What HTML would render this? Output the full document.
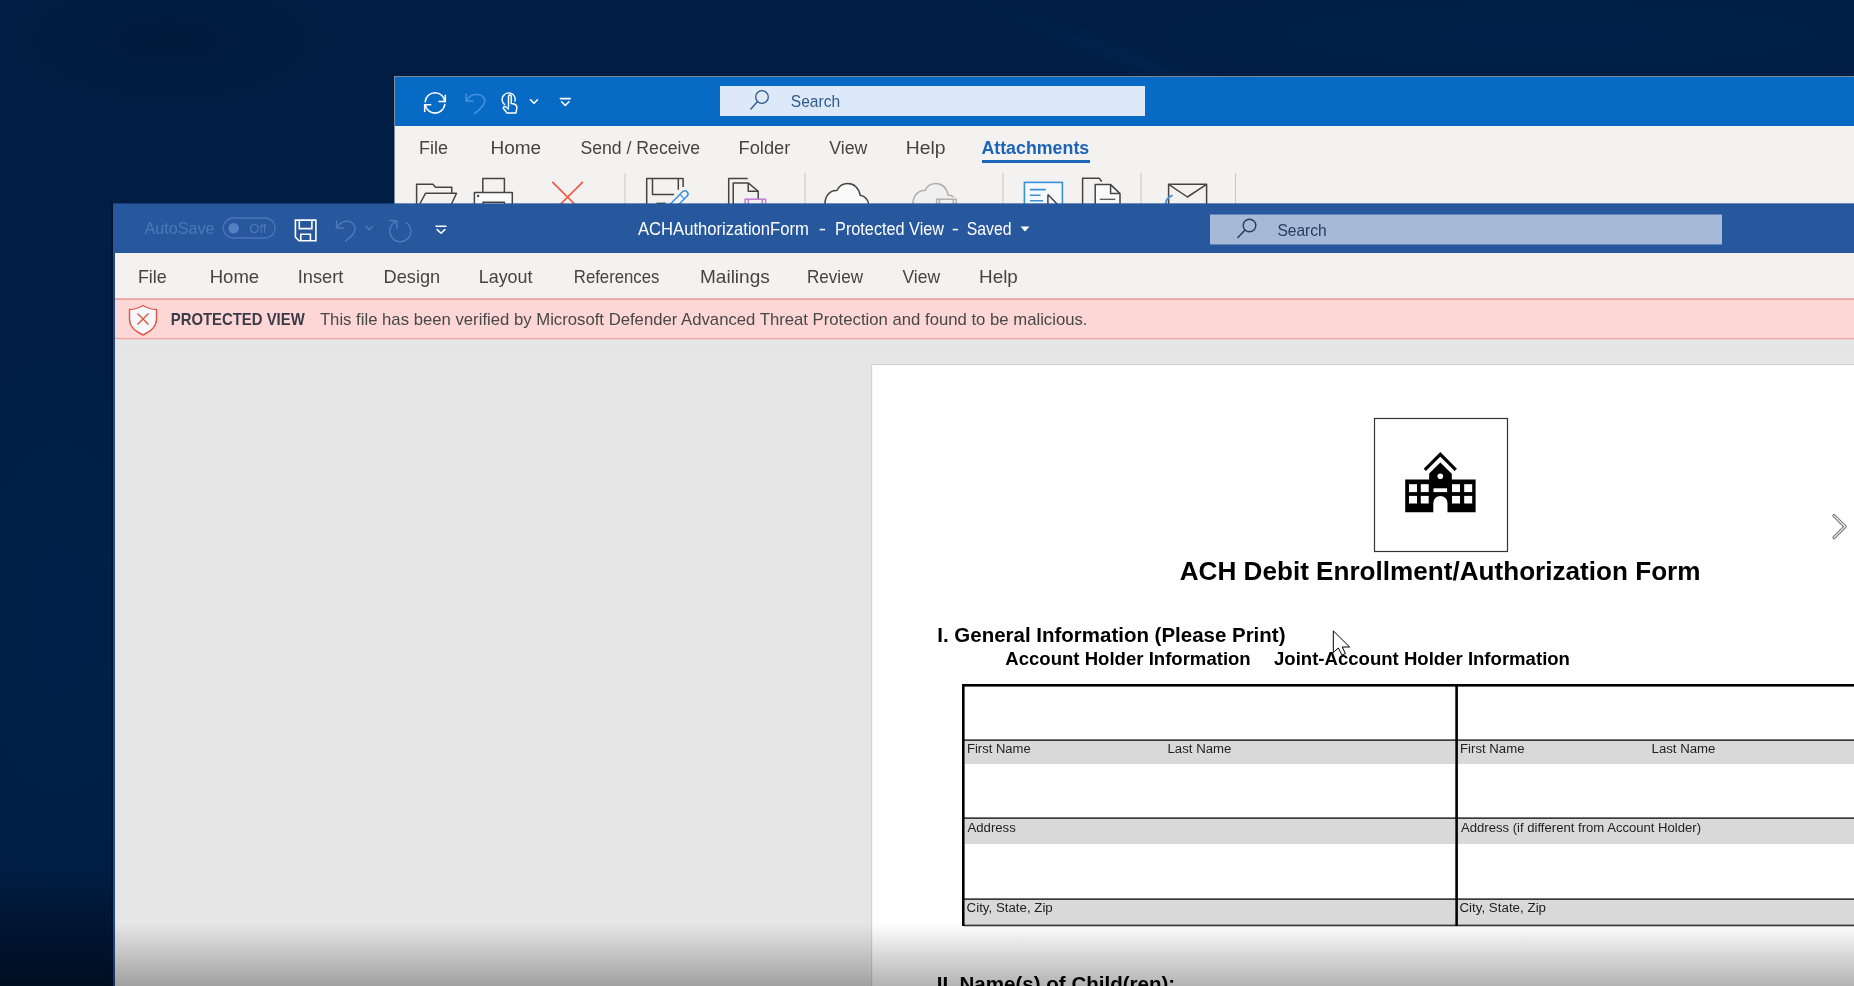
<!DOCTYPE html>
<html><head><meta charset="utf-8"><style>
html,body{margin:0;padding:0;width:1854px;height:986px;overflow:hidden;background:#011a3c}
svg{display:block;will-change:transform}
text{font-family:"Liberation Sans",sans-serif;white-space:pre}
</style></head><body>
<svg width="1854" height="986" viewBox="0 0 1854 986">
<defs>
 <radialGradient id="dk1" cx="0.5" cy="0.5" r="0.5"><stop offset="0" stop-color="#00295a" stop-opacity="0.9"/><stop offset="1" stop-color="#00295a" stop-opacity="0"/></radialGradient>
 <radialGradient id="dk2" cx="0.5" cy="0.5" r="0.5"><stop offset="0" stop-color="#00122c" stop-opacity="0.9"/><stop offset="1" stop-color="#00122c" stop-opacity="0"/></radialGradient>
 <linearGradient id="btm" x1="0" y1="0" x2="0" y2="1"><stop offset="0" stop-color="#000" stop-opacity="0"/><stop offset="1" stop-color="#000" stop-opacity="0.3"/></linearGradient>
 <linearGradient id="dkb" x1="0" y1="0" x2="0" y2="1"><stop offset="0" stop-color="#000c20" stop-opacity="0"/><stop offset="0.4" stop-color="#000c20" stop-opacity="0.8"/><stop offset="1" stop-color="#000c20" stop-opacity="1"/></linearGradient>
</defs>
<!-- desktop -->
<rect x="0" y="0" width="1854" height="986" fill="#001e43"/>
<ellipse cx="60" cy="620" rx="140" ry="300" fill="url(#dk1)" opacity="0.35"/>
<ellipse cx="1550" cy="35" rx="450" ry="55" fill="url(#dk1)" opacity="0.35"/>
<ellipse cx="170" cy="40" rx="170" ry="70" fill="url(#dk2)" opacity="0.35"/>
<rect x="0" y="870" width="120" height="116" fill="url(#dkb)" opacity="0.55"/>
<ellipse cx="1120" cy="55" rx="170" ry="14" transform="rotate(20 1120 55)" fill="url(#dk1)" opacity="0.5"/>

<!-- ===== Outlook window ===== -->
<rect x="394" y="76" width="1470" height="140" fill="#7d8898"/>
<rect x="395" y="77" width="1470" height="49" fill="#076ac4"/>
<rect x="395" y="126" width="1470" height="90" fill="#f3f2f1"/>
<!-- search box -->
<rect x="720" y="86" width="425" height="30" fill="#dde9f8"/>
<g fill="none" stroke="#2e5b8c" stroke-width="1.3"><circle cx="762" cy="97" r="6.3"/><path d="M757.5 101.5 L750.5 109.5"/></g>
<text x='790.87' y='107' font-size='16.8' font-weight='normal' fill='#2e5b8c' textLength='49.21' lengthAdjust='spacingAndGlyphs'>Search</text>
<!-- QAT icons -->
<g fill="none" stroke="#fff" stroke-width="1.6" stroke-linecap="round" stroke-linejoin="round">
 <path d="M425.2 101.6 A9.9 9.9 0 0 1 444.9 101.6"/><path d="M445.3 95.3 L445.3 101.5 L439.1 101.5"/>
 <path d="M444.8 104.6 A9.9 9.9 0 0 1 425.2 104.6"/><path d="M424.7 111.4 L424.7 104.8 L430.7 104.8"/>
 <path d="M530.5 99.8 L534 103.3 L537.5 99.8"/>
 <path d="M560.3 98.6 L570.3 98.6"/><path d="M561.6 101.8 L565.3 105.4 L569 101.8"/>
</g>
<g fill="none" stroke="#4a90dd" stroke-width="1.5" stroke-linecap="round" stroke-linejoin="round">
 <path d="M466 94 L466 101 L473 101"/><path d="M466.5 100.5 C470 94 480 92 484 98 C487 103 480 110 474.5 113.5"/>
</g>
<g fill="none" stroke="#fff" stroke-width="1.5" stroke-linecap="round" stroke-linejoin="round">
 <path d="M504.5 104.5 A6.5 6.5 0 1 1 515 101"/>
 <path d="M508.5 107 L508.5 96.5 A1.4 1.4 0 0 1 511.3 96.5 L511.3 103.5 L514 104 C516 104.5 517 106 516.8 108 L516 113 L507 113 L503.5 108.5 C503 107 504.5 105.8 506 107 L508.5 109"/>
</g>
<text x='419.00' y='154' font-size='18' font-weight='normal' fill='#444' textLength='29.02' lengthAdjust='spacingAndGlyphs'>File</text>
<text x='490.45' y='154' font-size='18' font-weight='normal' fill='#444' textLength='50.63' lengthAdjust='spacingAndGlyphs'>Home</text>
<text x='580.52' y='154' font-size='18' font-weight='normal' fill='#444' textLength='119.53' lengthAdjust='spacingAndGlyphs'>Send / Receive</text>
<text x='738.48' y='154' font-size='18' font-weight='normal' fill='#444' textLength='51.95' lengthAdjust='spacingAndGlyphs'>Folder</text>
<text x='829.30' y='154' font-size='18' font-weight='normal' fill='#444' textLength='38.11' lengthAdjust='spacingAndGlyphs'>View</text>
<text x='905.83' y='154' font-size='18' font-weight='normal' fill='#444' textLength='39.78' lengthAdjust='spacingAndGlyphs'>Help</text>
<text x='981.41' y='154' font-size='18' font-weight='bold' fill='#1c64b8' textLength='107.81' lengthAdjust='spacingAndGlyphs'>Attachments</text>
<rect x="982" y="160" width="108" height="3" fill="#1c64b8"/>
<!-- ribbon separators -->
<g fill="#c8c6c4"><rect x="624.5" y="173" width="1" height="32"/><rect x="804.5" y="173" width="1" height="32"/><rect x="1002.5" y="173" width="1" height="32"/><rect x="1140.5" y="173" width="1" height="32"/><rect x="1235" y="173" width="1" height="32"/></g>
<!-- ribbon icons (partially covered) -->
<g fill="none" stroke="#444" stroke-width="1.5" stroke-linejoin="round">
 <path d="M416.6 205 L416.6 184.2 L432.9 184.2 L435.5 187.3 L451.8 187.3 L451.8 193.2"/><path d="M419.2 205 L425.5 193.3 L456.5 193.3 L451 205"/>
 <path d="M482.8 192.4 L482.8 178.6 L504.4 178.6 L504.4 192.4"/><rect x="474.4" y="192.5" width="37.9" height="16" fill="#fafafa"/><rect x="483" y="202.3" width="21.4" height="6" fill="#fafafa"/>
 <path d="M646.7 205 L646.7 178.4 L683.1 178.4 L683.1 187"/><path d="M652.5 178.4 L652.5 194.6 L674 194.6"/><path d="M678.3 178.4 L678.3 189.8"/>
 <path d="M728.7 205 L728.7 178.4 L747.7 178.4"/><path d="M733.2 205 L733.2 182.9 L748.2 182.9 L758.2 191.3 L758.2 199"/><path d="M748.2 182.9 L748.2 191.3 L758.2 191.3"/>
 <path d="M825 205 C824.5 196 830 190 837 190.5 C839.5 185.5 843.5 183.6 847.6 183.6 C854 183.6 859 188 860.2 195.3 C865 196 868.6 200 868.6 205" fill="#fafafa"/>
 <path d="M1082.6 205 L1082.6 178.2 L1099.1 178.2 L1101.8 181.5"/><path d="M1095.2 205 L1095.2 184.6 L1110.6 184.6 L1120 193.6 L1120 205" fill="#fafafa"/><path d="M1110.6 184.6 L1110.6 193.6 L1120 193.6"/>
 <path d="M1168.6 205 L1168.6 184.3 L1206.6 184.3 L1206.6 205"/><path d="M1169 184.6 L1187.4 197 L1206.2 184.6"/>
</g>
<path d="M1099.8 199.3 L1115.3 199.3" stroke="#555" stroke-width="1.3"/>
<circle cx="478.1" cy="195.9" r="1.2" fill="#444"/>
<path d="M667.5 207 L682.5 191.8 A3 3 0 0 1 687 196.3 L672 211 Z" fill="#f4f8fc" stroke="#3a8ee0" stroke-width="1.5"/><path d="M680 194.3 L684.5 198.8" stroke="#3a8ee0" stroke-width="1.2"/><rect x="656.4" y="202.6" width="9.2" height="2" fill="#444"/>
<g stroke="#4a90dd" stroke-width="1.8" fill="none" stroke-linecap="round"><path d="M1165.2 205 C1165.8 200 1168.5 197 1172 195.6"/></g>
<g fill="none" stroke="#ec5a45" stroke-width="1.7"><path d="M552.3 181.8 L583 212.5"/><path d="M582.9 181.8 L552.2 212.5"/></g>
<g fill="none" stroke="#c27ad8" stroke-width="1.5"><rect x="745.2" y="199.2" width="20.4" height="9"/><path d="M748.3 199.2 L748.3 206 M762.2 199.2 L762.2 206"/></g>
<g fill="none" stroke="#b0b0b0" stroke-width="1.5"><path d="M913 205 C912.5 196 918 190 925 190.5 C927.5 185.5 931.5 183.6 935.6 183.6 C942 183.6 947 188 948 195 C950.5 195.3 952.5 196 954 197" fill="#f0f0f0"/><rect x="936.6" y="199.2" width="19.6" height="9"/><path d="M939.5 199.2 L939.5 206 M953.3 199.2 L953.3 206"/></g>
<g fill="none" stroke="#3a8fd8" stroke-width="1.6"><rect x="1024.4" y="182.4" width="38" height="26" fill="#f6f9fc"/><path d="M1029.9 189.6 L1045.8 189.6 M1029.9 195.2 L1040.5 195.2 M1029.9 200.8 L1043.1 200.8"/></g>
<path d="M1047.9 194.5 L1047.9 207 M1047.9 194.5 L1058 205" fill="none" stroke="#444" stroke-width="1.5"/>

<!-- ===== Word window ===== -->
<rect x="111.3" y="203.6" width="1.7" height="800" fill="#00112a"/>
<rect x="113" y="203.6" width="1760" height="800" fill="#1f4c8e"/>
<rect x="113" y="203.6" width="1760" height="49.4" fill="#27579d"/>
<!-- word qat -->
<text x='144.50' y='234.4' font-size='16.5' font-weight='normal' fill='#4f78b8' textLength='70.05' lengthAdjust='spacingAndGlyphs'>AutoSave</text>
<rect x="223.3" y="218" width="51.8" height="20" rx="10" fill="none" stroke="#4d75b6" stroke-width="1.3"/>
<circle cx="233.7" cy="228.3" r="5.3" fill="#5580c2"/>
<text x='249.26' y='232.5' font-size='12.5' font-weight='normal' fill='#4f78b8' textLength='17.17' lengthAdjust='spacingAndGlyphs'>Off</text>
<g fill="none" stroke="#fff" stroke-width="1.6" stroke-linejoin="miter">
 <path d="M295.4 220.1 L315.9 220.1 L315.9 240.7 L299 240.7 L295.4 237.1 Z"/>
 <path d="M299.3 220.1 L299.3 228.6 L311.9 228.6 L311.9 220.1"/>
 <path d="M300.8 240.7 L300.8 234.2 L310.4 234.2 L310.4 240.7"/>
</g>
<g fill="none" stroke="#5178b8" stroke-width="1.5" stroke-linecap="round" stroke-linejoin="round">
 <path d="M336.5 221 L336.5 228 L343.5 228"/><path d="M337 227.5 C341 220 351 219 354.5 226 C357 231 351 237 345.5 241"/>
 <path d="M366.2 226.5 L369.2 229.8 L372.2 226.5"/>
 <path d="M389.3 220.4 L396.7 220.8 L396.9 228.3"/><path d="M396.6 221.4 A10.5 10.5 0 1 0 406.4 222.7"/>
</g>
<g fill="none" stroke="#fff" stroke-width="1.5" stroke-linecap="round" stroke-linejoin="round">
 <path d="M436 226.2 L446 226.2"/><path d="M437.2 229.6 L441 233.2 L444.8 229.6"/>
</g>
<text x='638.00' y='234.6' font-size='17.5' font-weight='normal' fill='#fff' textLength='170.88' lengthAdjust='spacingAndGlyphs'>ACHAuthorizationForm</text>
<text x='818.75' y='234.6' font-size='17.5' font-weight='normal' fill='#fff' textLength='7.29' lengthAdjust='spacingAndGlyphs'>-</text>
<text x='835.07' y='234.6' font-size='17.5' font-weight='normal' fill='#fff' textLength='108.96' lengthAdjust='spacingAndGlyphs'>Protected View</text>
<text x='951.75' y='234.6' font-size='17.5' font-weight='normal' fill='#fff' textLength='7.29' lengthAdjust='spacingAndGlyphs'>-</text>
<text x='966.80' y='234.6' font-size='17.5' font-weight='normal' fill='#fff' textLength='44.77' lengthAdjust='spacingAndGlyphs'>Saved</text>
<path d="M1020.5 226.6 L1029.4 226.6 L1025 231.6 Z" fill="#fff"/>
<!-- word search -->
<rect x="1210" y="214.5" width="512" height="30" fill="#a6b9d6"/>
<g fill="none" stroke="#263b5e" stroke-width="1.4"><circle cx="1249.5" cy="225.5" r="6.3"/><path d="M1245 230 L1237.5 238"/></g>
<text x='1277.38' y='235.8' font-size='17' font-weight='normal' fill='#263b5e' textLength='49.42' lengthAdjust='spacingAndGlyphs'>Search</text>
<!-- word menubar -->
<rect x="115" y="253" width="1760" height="45.5" fill="#f3f2f1"/>
<text x='137.93' y='283.1' font-size='18.5' font-weight='normal' fill='#444' textLength='28.85' lengthAdjust='spacingAndGlyphs'>File</text>
<text x='209.70' y='283.1' font-size='18.5' font-weight='normal' fill='#444' textLength='49.46' lengthAdjust='spacingAndGlyphs'>Home</text>
<text x='297.73' y='283.1' font-size='18.5' font-weight='normal' fill='#444' textLength='45.54' lengthAdjust='spacingAndGlyphs'>Insert</text>
<text x='383.62' y='283.1' font-size='18.5' font-weight='normal' fill='#444' textLength='56.57' lengthAdjust='spacingAndGlyphs'>Design</text>
<text x='478.73' y='283.1' font-size='18.5' font-weight='normal' fill='#444' textLength='53.83' lengthAdjust='spacingAndGlyphs'>Layout</text>
<text x='573.80' y='283.1' font-size='18.5' font-weight='normal' fill='#444' textLength='85.56' lengthAdjust='spacingAndGlyphs'>References</text>
<text x='699.97' y='283.1' font-size='18.5' font-weight='normal' fill='#444' textLength='69.81' lengthAdjust='spacingAndGlyphs'>Mailings</text>
<text x='806.98' y='283.1' font-size='18.5' font-weight='normal' fill='#444' textLength='56.02' lengthAdjust='spacingAndGlyphs'>Review</text>
<text x='902.40' y='283.1' font-size='18.5' font-weight='normal' fill='#444' textLength='37.68' lengthAdjust='spacingAndGlyphs'>View</text>
<text x='979.08' y='283.1' font-size='18.5' font-weight='normal' fill='#444' textLength='38.80' lengthAdjust='spacingAndGlyphs'>Help</text>
<!-- protected view bar -->
<rect x="115" y="298" width="1760" height="42" fill="#fcd7d5"/>
<rect x="115" y="298.3" width="1760" height="1.7" fill="#eba39e"/>
<rect x="115" y="337.9" width="1760" height="1.7" fill="#eda8a3"/>
<path d="M143 305.5 C138 308.5 133.5 309.5 129.5 309.5 L129.5 319 C129.5 326 134 331 143 335 C152 331 156.5 326 156.5 319 L156.5 309.5 C152.5 309.5 148 308.5 143 305.5 Z" fill="#f4f8fa" stroke="#e45445" stroke-width="1.4" stroke-linejoin="round"/>
<g stroke="#e45445" stroke-width="1.4"><path d="M137.5 313.5 L148.5 324.5"/><path d="M148.5 313.5 L137.5 324.5"/></g>
<text x='170.78' y='325.2' font-size='16.2' font-weight='bold' fill='#3b3a48' textLength='133.95' lengthAdjust='spacingAndGlyphs'>PROTECTED VIEW</text>
<text x='319.90' y='325.2' font-size='16.2' font-weight='normal' fill='#484848' textLength='767.60' lengthAdjust='spacingAndGlyphs'>This file has been verified by Microsoft Defender Advanced Threat Protection and found to be malicious.</text>
<!-- doc area -->
<rect x="115" y="339.6" width="1760" height="660" fill="#e6e6e6"/>
<rect x="115" y="339.6" width="1760" height="8" fill="#e4e5e8"/>
<rect x="871" y="364" width="1000" height="640" fill="#d2d2d2"/>
<rect x="872.2" y="365.1" width="1000" height="640" fill="#fff"/>
<!-- logo box -->
<rect x="1374.5" y="418.5" width="133" height="133" fill="none" stroke="#333" stroke-width="1.2"/>
<path d="M1424.8 469.8 L1440.3 454.3 L1455.8 469.8" fill="none" stroke="#000" stroke-width="3.2" stroke-linejoin="miter"/>
<path d="M1429.2 479.4 L1429.2 473.6 L1440.3 462.5 L1451.8 473.8 L1451.8 479.4 L1475.6 479.4 L1475.6 512.2 L1447.5 512.2 L1447.5 503 A7.1 7.1 0 0 0 1433.3 503 L1433.3 512.2 L1405.2 512.2 L1405.2 479.4 Z" fill="#000"/>
<g fill="#fff">
 <circle cx="1440.3" cy="476.2" r="2.8"/>
 <rect x="1433.5" y="488.3" width="13.6" height="3.8"/>
 <rect x="1409" y="484.2" width="8" height="7.9"/><rect x="1420.8" y="484.2" width="7.9" height="7.9"/>
 <rect x="1409" y="495.9" width="8" height="7.6"/><rect x="1420.8" y="495.9" width="7.9" height="7.6"/>
 <rect x="1452" y="484.2" width="8" height="7.9"/><rect x="1464.2" y="484.2" width="8" height="7.9"/>
 <rect x="1452" y="495.9" width="8" height="7.6"/><rect x="1464.2" y="495.9" width="8" height="7.6"/>
</g>
<text x='1179.78' y='580.2' font-size='25.6' font-weight='bold' fill='#000' textLength='520.70' lengthAdjust='spacingAndGlyphs'>ACH Debit Enrollment/Authorization Form</text>
<text x='937.29' y='642' font-size='20.3' font-weight='bold' fill='#000' textLength='348.19' lengthAdjust='spacingAndGlyphs'>I. General Information (Please Print)</text>
<text x='1005.30' y='665' font-size='18.5' font-weight='bold' fill='#000' textLength='245.43' lengthAdjust='spacingAndGlyphs'>Account Holder Information</text>
<text x='1274.00' y='665' font-size='18.5' font-weight='bold' fill='#000' textLength='295.97' lengthAdjust='spacingAndGlyphs'>Joint-Account Holder Information</text>
<!-- table -->
<g fill="#d9d9d9">
 <rect x="965" y="741" width="490" height="23"/><rect x="1458" y="741" width="400" height="23"/>
 <rect x="965" y="819" width="490" height="25"/><rect x="1458" y="819" width="400" height="25"/>
 <rect x="965" y="900" width="490" height="25"/><rect x="1458" y="900" width="400" height="25"/>
</g>
<g fill="#3a3a3a">
 <rect x="964" y="739.3" width="900" height="1.7"/>
 <rect x="964" y="817.3" width="900" height="1.7"/>
 <rect x="964" y="898.3" width="900" height="1.7"/>
 <rect x="964" y="924.6" width="900" height="1.7"/>
</g>
<g fill="#000">
 <rect x="962" y="684" width="900" height="2.6"/>
 <rect x="962" y="684" width="2.6" height="242"/>
 <rect x="1455.3" y="684" width="2.6" height="242"/>
</g>
<text x='966.96' y='753.3' font-size='12.5' font-weight='normal' fill='#222' textLength='63.77' lengthAdjust='spacingAndGlyphs'>First Name</text>
<text x='1167.54' y='753.3' font-size='12.5' font-weight='normal' fill='#222' textLength='63.83' lengthAdjust='spacingAndGlyphs'>Last Name</text>
<text x='1460.04' y='753.3' font-size='12.5' font-weight='normal' fill='#222' textLength='64.49' lengthAdjust='spacingAndGlyphs'>First Name</text>
<text x='1651.54' y='753.3' font-size='12.5' font-weight='normal' fill='#222' textLength='63.94' lengthAdjust='spacingAndGlyphs'>Last Name</text>
<text x='967.50' y='831.5' font-size='12.5' font-weight='normal' fill='#222' textLength='48.20' lengthAdjust='spacingAndGlyphs'>Address</text>
<text x='1461.00' y='831.5' font-size='12.5' font-weight='normal' fill='#222' textLength='240.10' lengthAdjust='spacingAndGlyphs'>Address (if different from Account Holder)</text>
<text x='966.64' y='912.4' font-size='12.5' font-weight='normal' fill='#222' textLength='86.11' lengthAdjust='spacingAndGlyphs'>City, State, Zip</text>
<text x='1459.43' y='912.4' font-size='12.5' font-weight='normal' fill='#222' textLength='86.62' lengthAdjust='spacingAndGlyphs'>City, State, Zip</text>
<text x='936.69' y='991.2' font-size='20.3' font-weight='bold' fill='#000' textLength='238.53' lengthAdjust='spacingAndGlyphs'>II. Name(s) of Child(ren):</text>
<!-- page nav chevron -->
<path d="M1834 515.6 L1845 526.6 L1834 537.6" fill="none" stroke="#777" stroke-width="3.4" stroke-linecap="round" stroke-linejoin="round"/>
<path d="M1834 515.6 L1845 526.6 L1834 537.6" fill="none" stroke="#f4f4f4" stroke-width="1.2" stroke-linecap="round"/>
<!-- cursor -->
<path d="M1333.3 630.9 L1333.3 652.5 L1338.3 648 L1342 655 L1345.4 653.5 L1342.2 647 L1349.7 647 Z" fill="#fff" stroke="#000" stroke-width="1" stroke-linejoin="miter"/>

<!-- bottom fade -->
<rect x="0" y="923" width="1854" height="63" fill="url(#btm)"/>

</svg>
</body></html>
